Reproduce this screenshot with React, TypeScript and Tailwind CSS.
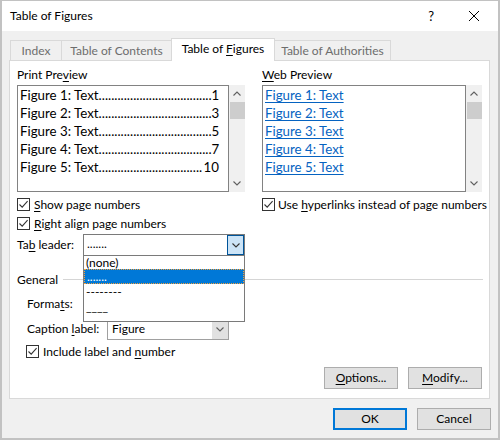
import React from 'react';

const Key = ({ children }: { children: React.ReactNode }) => (
  <span className="underline decoration-1 underline-offset-[2px]">{children}</span>
);

const CheckBox = () => (
  <span className="w-[13px] h-[13px] border border-[#333333] bg-white flex items-center justify-center shrink-0">
    <svg width="11" height="11" viewBox="0 0 11 11">
      <path d="M1.5 5.5 L4.2 8.2 L9.6 2.2" stroke="#333333" strokeWidth="1.1" fill="none" />
    </svg>
  </span>
);

const Chevron = ({ up = false, color = '#606060' }: { up?: boolean; color?: string }) => (
  <svg width="8" height="5" viewBox="0 0 8 5">
    <path d={up ? 'M0.5 4.5 L4 1 L7.5 4.5' : 'M0.5 0.5 L4 4 L7.5 0.5'} stroke={color} strokeWidth="1.1" fill="none" />
  </svg>
);

const ScrollBar = () => (
  <div className="w-[16px] h-[107px] bg-[#f0f0f0] flex flex-col items-center">
    <div className="h-[17px] flex items-center justify-center">
      <Chevron up />
    </div>
    <div className="w-[15px] h-[17px] bg-[#cdcdcd]" />
    <div className="flex-1" />
    <div className="h-[17px] flex items-center justify-center">
      <Chevron />
    </div>
  </div>
);

const printItems = [
  { label: 'Figure 1: Text', page: '1', dots: 36 },
  { label: 'Figure 2: Text', page: '3', dots: 36 },
  { label: 'Figure 3: Text', page: '5', dots: 36 },
  { label: 'Figure 4: Text', page: '7', dots: 36 },
  { label: 'Figure 5: Text', page: '10', dots: 33 },
];

const tabs = [
  { label: 'Index', width: 'w-[52px]' },
  { label: 'Table of Contents', width: 'w-[111px]' },
];

export default function App() {
  return (
    <div className="w-[500px] h-[440px] flex flex-col border-2 border-t border-[#c2c2c2] bg-[#f0f0f0] font-['Lato',sans-serif] text-[12px] text-black leading-none">
      {/* Title bar */}
      <div className="h-[30px] bg-white flex items-center pl-[8px] shrink-0">
        <span className="text-[12px]">Table of Figures</span>
        <span className="ml-auto text-[13px]">?</span>
        <svg className="ml-[34px] mr-[18px]" width="12" height="12" viewBox="0 0 12 12">
          <path d="M1 1 L11 11 M11 1 L1 11" stroke="#000000" strokeWidth="1" fill="none" />
        </svg>
      </div>

      {/* Body */}
      <div className="flex-1 flex flex-col pl-[7px] pr-[7px] pt-[7px]">
        {/* Tabs */}
        <div className="relative z-10 flex items-end h-[23px] -mb-px pl-px">
          {tabs.map((t, i) => (
            <div
              key={t.label}
              className={`${t.width} h-[20px] mb-px ${i > 0 ? '-ml-px' : ''} border border-b-0 border-[#d9d9d9] bg-[#f0f0f0] text-[#6d6d6d] flex items-center justify-center`}
            >
              {t.label}
            </div>
          ))}
          <div className="w-[104px] h-[23px] -ml-px border border-b-0 border-[#d9d9d9] bg-white flex items-center justify-center pb-[2px]">
            <span>
              Table of <Key>F</Key>igures
            </span>
          </div>
          <div className="w-[117px] h-[20px] mb-px -ml-px border border-b-0 border-[#d9d9d9] bg-[#f0f0f0] text-[#6d6d6d] flex items-center justify-center">
            Table of Authorities
          </div>
        </div>

        {/* Panel */}
        <div className="relative w-[481px] h-[339px] bg-white border border-[#d9d9d9] pt-[6px] pl-[7px] pr-[7px]">
          <div className="flex h-[203px]">
            {/* Print preview */}
            <div className="w-[228px] flex flex-col">
              <div className="h-[16px] flex items-center">
                <span>
                  Print Pre<Key>v</Key>iew
                </span>
              </div>
              <div className="mt-[2px] flex">
                <div className="w-[212px] h-[107px] border border-[#828282] pt-px pl-[2px] pr-[9px] text-[13.3px]">
                  {printItems.map((it) => (
                    <div key={it.label} className="h-[18px] flex items-center justify-between whitespace-nowrap">
                      <span>
                        {it.label}
                        {'.'.repeat(it.dots)}
                      </span>
                      <span>{it.page}</span>
                    </div>
                  ))}
                </div>
                <ScrollBar />
              </div>
              <div className="mt-[3px] h-[19px] flex items-center gap-[4px]">
                <CheckBox />
                <span>
                  <Key>S</Key>how page numbers
                </span>
              </div>
              <div className="h-[19px] flex items-center gap-[4px]">
                <CheckBox />
                <span>
                  <Key>R</Key>ight align page numbers
                </span>
              </div>
              <div className="mt-px h-[22px] flex items-center">
                <span className="w-[66px]">
                  Ta<Key>b</Key> leader:
                </span>
                <div className="w-[162px] h-[22px] border border-[#7a7a7a] flex items-center">
                  <span className="flex-1 pl-[3px] pb-[3px]">.......</span>
                  <div className="w-[17px] h-[20px] border border-[#005499] bg-[#cce4f7] flex items-center justify-center">
                    <Chevron color="#333333" />
                  </div>
                </div>
              </div>
            </div>

            <div className="ml-[9px] mt-px w-px bg-[#a0a0a0]" />

            {/* Web preview */}
            <div className="ml-[8px] w-[220px] flex flex-col">
              <div className="h-[16px] flex items-center">
                <span>
                  <Key>W</Key>eb Preview
                </span>
              </div>
              <div className="mt-[2px] flex">
                <div className="w-[204px] h-[107px] border border-[#828282] pt-px pl-[2px] text-[13.3px] text-[#0563c1]">
                  {printItems.map((it) => (
                    <div key={it.label} className="h-[18px] flex items-center">
                      <span className="underline decoration-1 underline-offset-[2px]">{it.label}</span>
                    </div>
                  ))}
                </div>
                <ScrollBar />
              </div>
              <div className="mt-[3px] h-[19px] flex items-center gap-[3px]">
                <CheckBox />
                <span className="whitespace-nowrap">
                  Use <Key>h</Key>yperlinks instead of page numbers
                </span>
              </div>
            </div>
          </div>

          {/* General */}
          <div className="h-[19px] flex items-center">
            <span>General</span>
            <div className="flex-1 ml-[5px] mr-[-1px] h-px bg-[#d5d5d5]" />
          </div>
          <div className="mt-[5px] h-[20px] flex items-center pl-[10px]">
            <span>
              Forma<Key>t</Key>s:
            </span>
          </div>
          <div className="mt-[4px] h-[22px] flex items-center pl-[10px]">
            <span className="w-[80px]">
              Caption <Key>l</Key>abel:
            </span>
            <div className="w-[122px] h-[22px] border border-[#a0a0a0] flex items-center">
              <span className="flex-1 pl-[4px]">Figure</span>
              <div className="w-[16px] h-[20px] bg-[#e1e1e1] flex items-center justify-center">
                <Chevron />
              </div>
            </div>
          </div>
          <div className="mt-[2px] h-[19px] flex items-center gap-[4px] pl-[9px]">
            <CheckBox />
            <span>
              Include label and <Key>n</Key>umber
            </span>
          </div>
          <div className="mt-[6px] flex justify-end gap-[10px]">
            <button className="w-[74px] h-[22px] border border-[#adadad] bg-[#e1e1e1] flex items-center justify-center">
              <span>
                <Key>O</Key>ptions...
              </span>
            </button>
            <button className="w-[74px] h-[22px] border border-[#adadad] bg-[#e1e1e1] flex items-center justify-center">
              <span>
                <Key>M</Key>odify...
              </span>
            </button>
          </div>

          {/* Tab leader dropdown list */}
          <div className="absolute left-[73px] top-[194px] w-[162px] h-[67px] border border-[#7a7a7a] bg-white">
            <div className="h-[13px] flex items-center pl-[2px]">(none)</div>
            <div className="h-[15px] flex items-center pl-[2px] bg-[#0078d7] text-white border border-dotted border-[#f3a03a]">
              .......
            </div>
            <div className="h-[15px] flex items-center pl-[2px]">--------</div>
            <div className="h-[15px] flex items-center pl-[2px]">____</div>
          </div>
        </div>

        {/* Footer */}
        <div className="mt-[9px] flex justify-end gap-[10px]">
          <button className="w-[74px] h-[22px] border-2 border-[#0078d7] bg-[#e1e1e1] flex items-center justify-center">
            OK
          </button>
          <button className="w-[74px] h-[22px] border border-[#adadad] bg-[#e1e1e1] flex items-center justify-center">
            Cancel
          </button>
        </div>
      </div>
    </div>
  );
}
